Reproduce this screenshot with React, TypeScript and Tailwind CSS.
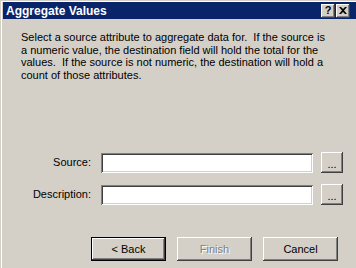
import React from 'react';

const raised =
  'shadow-[inset_-1px_-1px_#404040,inset_1px_1px_#ffffff,inset_-2px_-2px_#808080,inset_2px_2px_#d4d0c8]';
const sunken =
  'shadow-[inset_1px_1px_#808080,inset_-1px_-1px_#ffffff,inset_2px_2px_#404040,inset_-2px_-2px_#d4d0c8]';

const TitleButton = ({ children }: { children: React.ReactNode }) => (
  <div className={`w-[14px] h-[14px] bg-[#d4d0c8] flex items-center justify-center ${raised}`}>
    {children}
  </div>
);

const Field = ({ label }: { label: string }) => (
  <div className="flex items-center h-[21px]">
    <span className="w-[74px] text-right pr-[1px]">{label}</span>
    <div className={`ml-[9px] w-[212px] h-[20px] bg-white ${sunken}`} />
    <button className={`ml-[8px] w-[22px] h-[21px] bg-[#d4d0c8] flex items-end justify-center pb-[3px] leading-none ${raised}`}>
      ...
    </button>
  </div>
);

export default function App() {
  return (
    <div
      className="w-[356px] h-[268px] bg-[#d4d0c8] text-black text-[11px] overflow-hidden"
      style={{ fontFamily: '"Liberation Sans", Arial, sans-serif' }}
    >
      <div className="h-full pt-[1px] pl-[1px]">
        <div className="h-full border-t border-l border-white pt-0 pl-[1px] flex flex-col">
          <div className="h-[17px] bg-[#0a246a] flex items-center pl-[3px] pr-[6px]">
            <span className="text-white font-bold text-[12px] flex-1 leading-none">Aggregate Values</span>
            <div className="flex gap-[0px] items-center">
              <TitleButton>
                <span className="font-bold text-[11px] leading-none">?</span>
              </TitleButton>
              <div className="w-[1px]" />
              <TitleButton>
                <svg width="8" height="7" viewBox="0 0 8 7">
                  <path d="M0 0h2l2 2 2-2h2L5 3.5 8 7H6L4 5 2 7H0l3-3.5z" fill="#000" />
                </svg>
              </TitleButton>
            </div>
          </div>

          <div className="pl-[18px] pt-[12px] w-[330px] leading-[12.5px]">
            Select a source attribute to aggregate data for.&nbsp; If the source is a numeric value, the
            destination field will hold the total for the values.&nbsp; If the source is not numeric, the
            destination will hold a count of those attributes.
          </div>

          <div className="mt-[71px] pl-[15px] flex flex-col gap-[11px]">
            <Field label="Source:" />
            <Field label="Description:" />
          </div>

          <div className="mt-[32px] pl-[88px] flex gap-[11px]">
            <button className="w-[75px] h-[24px] bg-[#d4d0c8] border border-black shadow-[inset_-1px_-1px_#404040,inset_1px_1px_#ffffff,inset_-2px_-2px_#808080]">
              &lt; Back
            </button>
            <button className={`w-[75px] h-[24px] bg-[#d4d0c8] text-[#808080] [text-shadow:1px_1px_#ffffff] ${raised}`}>
              Finish
            </button>
            <button className={`w-[75px] h-[24px] bg-[#d4d0c8] ${raised}`}>Cancel</button>
          </div>
        </div>
      </div>
    </div>
  );
}
